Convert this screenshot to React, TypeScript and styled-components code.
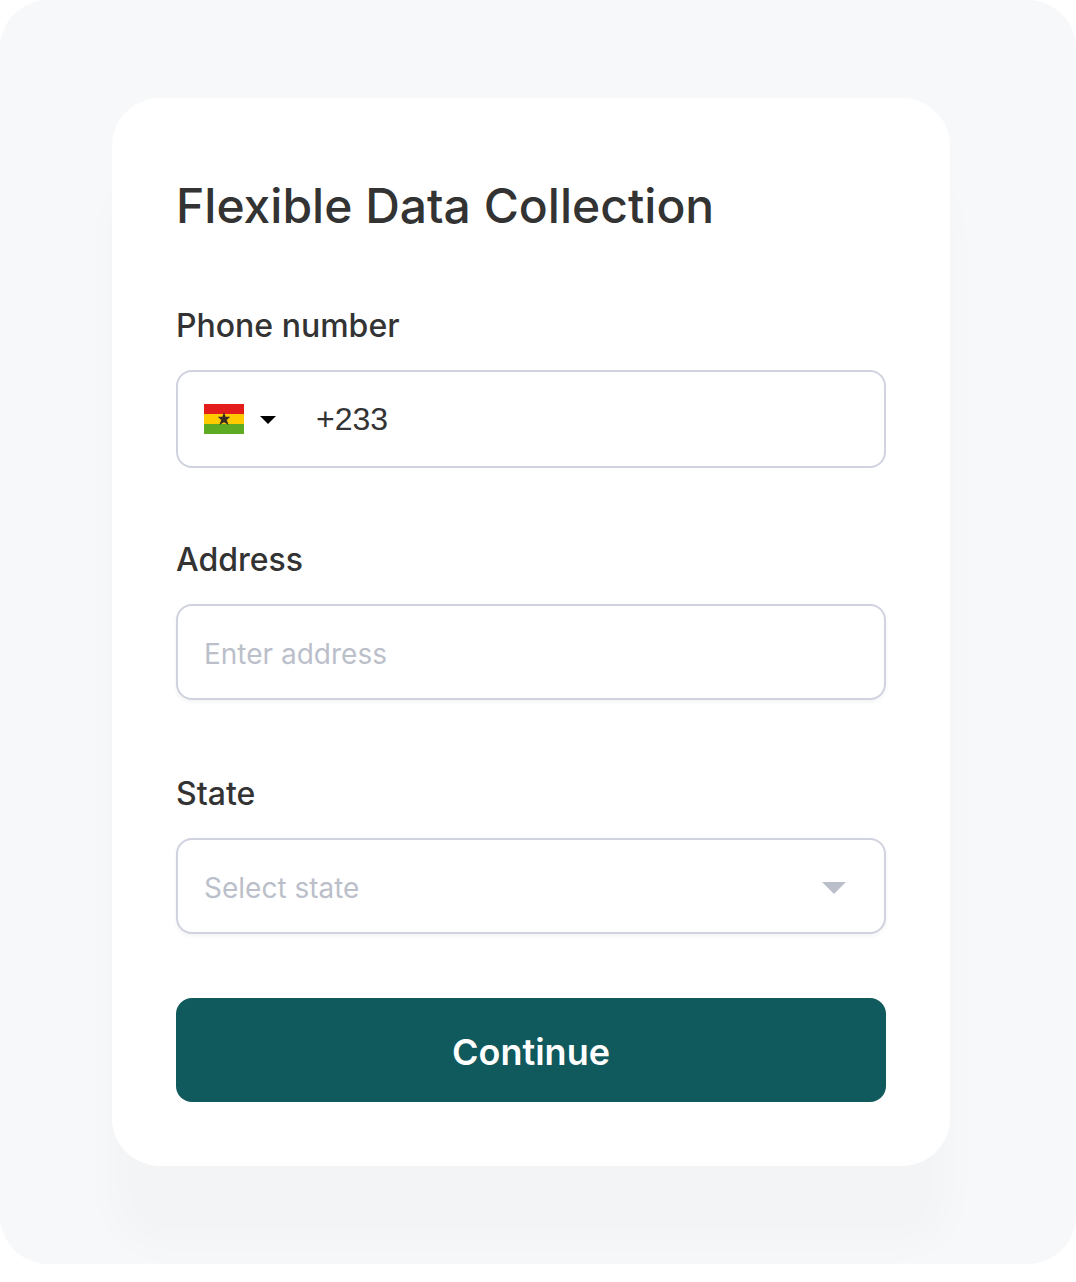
import React from "react";
import styled, { createGlobalStyle } from "styled-components";

const GlobalStyle = createGlobalStyle`
  *, *::before, *::after { box-sizing: border-box; }
  body {
    margin: 0;
    background: #ffffff;
    color: #333333;
    font-family: Inter, "Liberation Sans", sans-serif;
  }
  button, input, select { font-family: inherit; }
`;

const Stage = styled.main`
  overflow: hidden;
  padding: 98px 126px 98px 112px;
  border-radius: 48px;
  background: #f7f8fa;
`;

const Card = styled.form`
  display: flex;
  flex-direction: column;
  padding: 64px;
  border-radius: 48px;
  background: #ffffff;
  box-shadow: 0 80px 40px rgba(32, 32, 0, 0.02);
`;

const Title = styled.h1`
  margin: 0 0 56px;
  font-size: 48px;
  line-height: 88px;
  font-weight: 500;
`;

const Fields = styled.div`
  display: flex;
  flex-direction: column;
  gap: 70px;
  margin-bottom: 60px;
`;

const Field = styled.div`
  display: flex;
  flex-direction: column;
  gap: 24px;
  min-height: 164px;
`;

const Label = styled.label`
  font-size: 32px;
  line-height: 40px;
  font-weight: 500;
`;

const Control = styled.div<{ $tall?: boolean }>`
  display: flex;
  align-items: stretch;
  height: ${({ $tall }) => ($tall ? 98 : 96)}px;
  border: 2px solid #d0d3df;
  border-radius: 16px;
  background: #ffffff;
  box-shadow: ${({ $tall }) => ($tall ? "none" : "0 2px 4px rgba(16, 24, 40, 0.05)")};
`;

const CountryButton = styled.button`
  display: flex;
  align-items: center;
  gap: 16px;
  padding: 0 14px 0 26px;
  border: 0;
  background: transparent;
  cursor: pointer;
`;

const TextInput = styled.input`
  flex: 1;
  min-width: 0;
  padding: 4px 26px 0;
  border: 0;
  border-radius: 14px;
  outline-color: #10595c;
  background: transparent;
  color: #333333;
  font-size: 28px;

  &::placeholder {
    color: #bbbfca;
    opacity: 1;
  }
`;

const PhoneInput = styled(TextInput)`
  padding: 0 26px;
  font-family: "Liberation Sans", Arial, sans-serif;
  font-size: 32px;
`;

const SelectBox = styled.div`
  display: grid;
  flex: 1;
  grid-template-columns: 1fr 62px;
  align-items: center;
`;

const Select = styled.select`
  grid-area: 1 / 1 / 2 / 3;
  align-self: stretch;
  padding: 4px 62px 0 26px;
  border: 0;
  border-radius: 14px;
  outline-color: #10595c;
  appearance: none;
  background: transparent;
  color: #bbbfca;
  font-size: 28px;
`;

const SelectCaret = styled.svg`
  grid-area: 1 / 2;
  pointer-events: none;
`;

const Submit = styled.button`
  height: 104px;
  padding: 4px 24px 0;
  border: 0;
  border-radius: 16px;
  background: #10595c;
  color: #ffffff;
  font-size: 36px;
  font-weight: 600;
  line-height: 48px;
  cursor: pointer;
`;

const GhanaFlag = () => (
  <svg width="40" height="30" viewBox="0 0 40 30" aria-hidden="true">
    <path fill="#e31d1c" d="M0 0h40v10H0z" />
    <path fill="#ffcb00" d="M0 10h40v10H0z" />
    <path fill="#5eaa22" d="M0 20h40v10H0z" />
    <path
      fill="#3b2c20"
      d="m20 8 1.6 4.8h4.7l-3.5 3.1 1.9 5.1-4.7-2.7-4.7 2.7 1.9-5.1-3.5-3.1h4.7z"
    />
  </svg>
);

export default function App() {
  return (
    <>
      <GlobalStyle />
      <Stage>
        <Card onSubmit={(event) => event.preventDefault()}>
          <Title>Flexible Data Collection</Title>
          <Fields>
            <Field>
              <Label htmlFor="phone">Phone number</Label>
              <Control $tall>
                <CountryButton type="button" aria-label="Choose country code">
                  <GhanaFlag />
                  <svg width="16" height="10" viewBox="0 0 16 10" aria-hidden="true">
                    <path fill="#000000" d="M0 2h16L8 10z" />
                  </svg>
                </CountryButton>
                <PhoneInput id="phone" type="tel" defaultValue="+233" />
              </Control>
            </Field>
            <Field>
              <Label htmlFor="address">Address</Label>
              <Control>
                <TextInput id="address" type="text" placeholder="Enter address" />
              </Control>
            </Field>
            <Field>
              <Label htmlFor="state">State</Label>
              <Control>
                <SelectBox>
                  <Select id="state" defaultValue="">
                    <option value="">Select state</option>
                  </Select>
                  <SelectCaret width="24" height="16" viewBox="0 0 24 16" aria-hidden="true">
                    <path fill="#bbbfca" d="M0 4h24L12 16z" />
                  </SelectCaret>
                </SelectBox>
              </Control>
            </Field>
          </Fields>
          <Submit type="submit">Continue</Submit>
        </Card>
      </Stage>
    </>
  );
}
